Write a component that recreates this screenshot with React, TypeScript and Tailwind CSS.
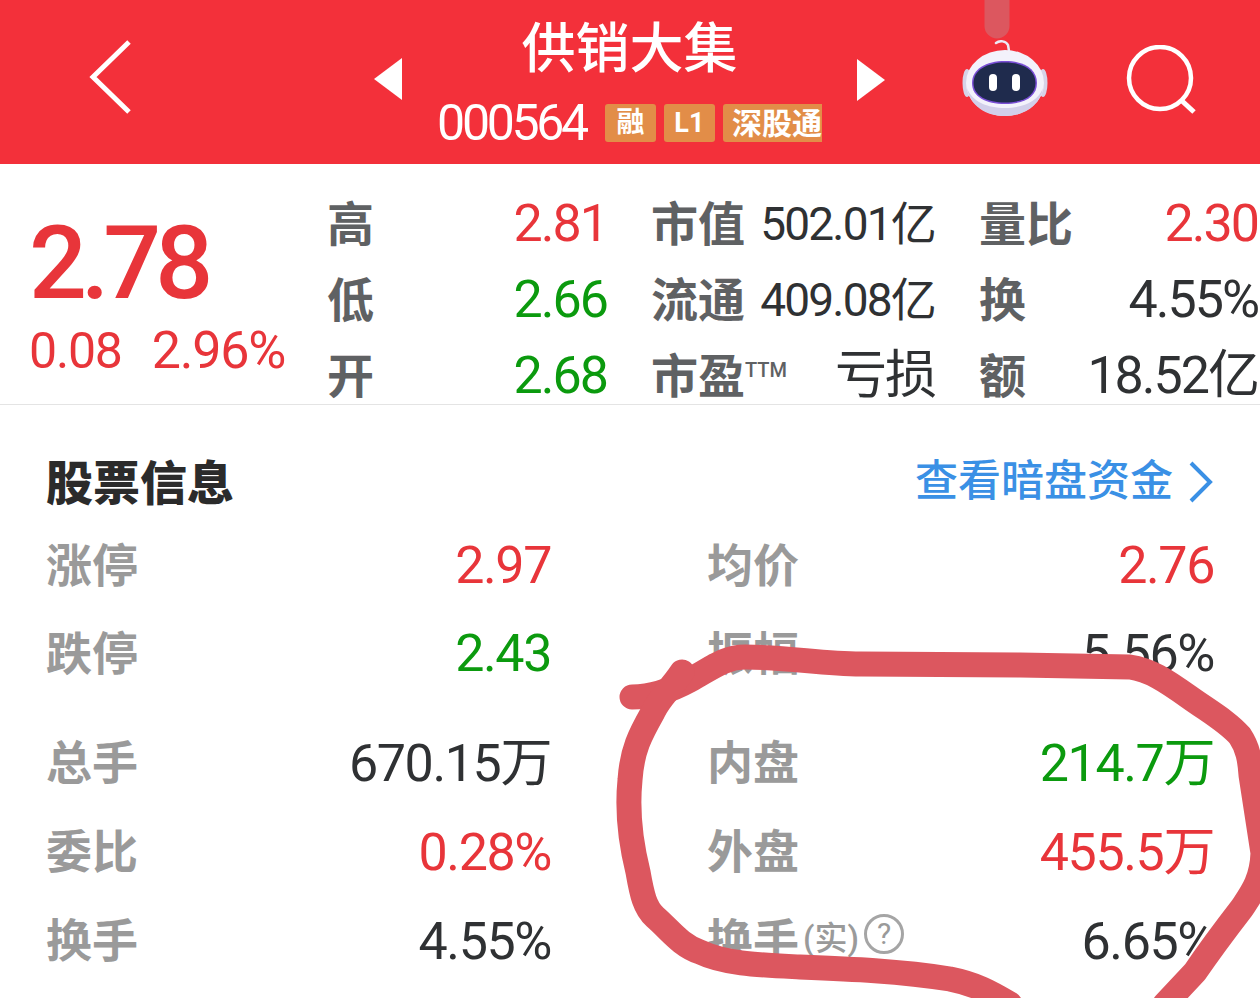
const RED = "text-[#e8353a]"
const GREEN = "text-[#0b9a0e]"
const DARK = "text-[#2f3133]"
const VALUE = "text-[52px] tracking-[-2px]"
const VALUE_SMALL = "text-[46px] tracking-[-1.8px]"
const INFO_VALUE = "text-[52px] tracking-[-1.4px]"

const quoteRows = [
  [
    { label: "高", value: "2.81", color: RED, size: VALUE },
    { label: "市值", value: "502.01亿", color: DARK, size: VALUE_SMALL },
    { label: "量比", value: "2.30", color: RED, size: VALUE },
  ],
  [
    { label: "低", value: "2.66", color: GREEN, size: VALUE },
    { label: "流通", value: "409.08亿", color: DARK, size: VALUE_SMALL },
    { label: "换", value: "4.55%", color: DARK, size: VALUE },
  ],
  [
    { label: "开", value: "2.68", color: GREEN, size: VALUE },
    { label: "市盈™", value: "亏损", color: DARK, size: VALUE },
    { label: "额", value: "18.52亿", color: DARK, size: VALUE },
  ],
]

const infoGroups = [
  {
    rowClass: "h-[88px]",
    rows: [
      { label: "涨停", value: "2.97", color: RED, label2: "均价", value2: "2.76", color2: RED },
      { label: "跌停", value: "2.43", color: GREEN, label2: "振幅", value2: "5.56%", color2: DARK },
    ],
  },
  {
    rowClass: "h-[89px]",
    rows: [
      { label: "总手", value: "670.15万", color: DARK, label2: "内盘", value2: "214.7万", color2: GREEN },
      { label: "委比", value: "0.28%", color: RED, label2: "外盘", value2: "455.5万", color2: RED },
      { label: "换手", value: "4.55%", color: DARK, label2: "换手", value2: "6.65%", color2: DARK, help: true },
    ],
  },
]

function RobotIcon() {
  return (
    <svg width="86" height="76" viewBox="0 0 86 76" className="shrink-0">
      <path d="M34 3 C38 0 44 1 46 5 L47 11" fill="none" stroke="#eceaf6" strokeWidth="2.5" strokeLinecap="round" />
      <ellipse cx="5" cy="43" rx="4.5" ry="14" fill="#d6d3e8" />
      <ellipse cx="81" cy="43" rx="4.5" ry="14" fill="#d6d3e8" />
      <ellipse cx="43" cy="43" rx="39" ry="33" fill="#f3f2fb" />
      <path d="M5 48 C8 66 24 76 43 76 C62 76 78 66 81 48 C76 62 60 68 43 68 C26 68 10 62 5 48 Z" fill="#d2cfea" />
      <path d="M10 43 C10 29 24 21 43 21 C62 21 75 29 75 43 C75 57 62 64 43 64 C24 64 10 57 10 43 Z" fill="#7a4fd6" />
      <path d="M11.5 43 C11.5 30 25 22.5 43 22.5 C61 22.5 73.5 30 73.5 43 C73.5 56 61 62.5 43 62.5 C25 62.5 11.5 56 11.5 43 Z" fill="#1f2b4d" />
      <rect x="27" y="34" width="8" height="17" rx="4" fill="#ffffff" />
      <rect x="50" y="34" width="8" height="17" rx="4" fill="#ffffff" />
    </svg>
  )
}

function StockHeader() {
  return (
    <div className="flex h-[164px] shrink-0 items-start bg-[#f3303a] text-white">
      <svg width="46" height="78" viewBox="0 0 46 78" className="mt-[38px] ml-[88px] shrink-0">
        <path d="M41 4 L5 39 L41 74" fill="none" stroke="#ffffff" strokeWidth="5" />
      </svg>
      <svg width="28" height="42" viewBox="0 0 28 42" className="mt-[58px] ml-[240px] shrink-0">
        <path d="M0 21 L28 0 L28 42 Z" fill="#ffffff" />
      </svg>
      <div className="flex w-[455px] shrink-0 flex-col items-center">
        <div className="mt-[16px] text-[54px] leading-[68px] font-medium">供销大集</div>
        <div className="mt-[18px] flex items-center gap-[8px]">
          <span className="mr-[11px] text-[50px] leading-[42px] tracking-[-3.3px]">000564</span>
          <span className="flex h-[38px] w-[51px] items-center justify-center rounded-[3px] bg-[#e28d48] text-[28px] font-bold">融</span>
          <span className="flex h-[38px] w-[51px] items-center justify-center rounded-[3px] bg-[#e28d48] text-[27px] font-bold">L1</span>
          <span className="flex h-[38px] w-[99px] items-center justify-end rounded-l-[3px] bg-[#e28d48] text-[30px] font-bold whitespace-nowrap">深股通</span>
        </div>
      </div>
      <svg width="28" height="42" viewBox="0 0 28 42" className="mt-[59px] shrink-0">
        <path d="M28 21 L0 0 L0 42 Z" fill="#ffffff" />
      </svg>
      <div className="mt-[40px] ml-[77px] shrink-0">
        <RobotIcon />
      </div>
      <svg width="72" height="70" viewBox="0 0 72 70" className="mt-[45px] ml-[78px] shrink-0">
        <circle cx="34" cy="33" r="31" fill="none" stroke="#ffffff" strokeWidth="4.5" />
        <path d="M55 55 L68 67" fill="none" stroke="#ffffff" strokeWidth="5" />
      </svg>
    </div>
  )
}

function QuotePanel() {
  return (
    <div className="flex h-[241px] shrink-0 overflow-hidden border-b border-[#e4e4e4]">
      <div className={`w-[327px] shrink-0 pl-[29px] ${RED}`}>
        <div className="mt-[39px] text-[102px] leading-[120px] font-medium tracking-[-6px]">2.78</div>
        <div className="-mt-[1px] flex items-baseline gap-[30px] text-[50px] leading-[58px] tracking-[-1.2px]">
          <span>0.08</span>
          <span className="text-[52px]">2.96%</span>
        </div>
      </div>
      <div className="pt-[22px]">
        {quoteRows.map((row) => (
          <div key={row[0].label} className="grid h-[76px] grid-cols-[280px_284px_279px] gap-x-[44px]">
            {row.map((cell) => (
              <div key={cell.label} className="flex items-center justify-between">
                <span className="text-[47px] leading-none font-bold whitespace-nowrap text-[#5f6163]">
                  {cell.label === "市盈™" ? (
                    <>
                      市盈<span className="relative -top-[16px] text-[20px] font-medium">TTM</span>
                    </>
                  ) : (
                    cell.label
                  )}
                </span>
                <span className={`leading-none whitespace-nowrap ${cell.size} ${cell.color}`}>{cell.value}</span>
              </div>
            ))}
          </div>
        ))}
      </div>
    </div>
  )
}

function StockInfo() {
  return (
    <div className="px-[46px] pt-[50px]">
      <div className="flex h-[58px] items-center justify-between">
        <h2 className="text-[47px] font-black text-[#2b2b2b]">股票信息</h2>
        <div className="-mt-[5px] flex items-center gap-[15px] text-[43px] font-medium text-[#3a90e5]">
          查看暗盘资金
          <svg width="26" height="42" viewBox="0 0 26 42">
            <path d="M3 2 L22 21 L3 40" fill="none" stroke="#3a90e5" strokeWidth="4" />
          </svg>
        </div>
      </div>
      <div className="mt-[9px]">
        {infoGroups.map((group, i) => (
          <div key={i} className={i === 1 ? "mt-[21px]" : ""}>
            {group.rows.map((row) => (
              <div key={row.label} className={`grid grid-cols-[505px_505px] gap-x-[158px] ${group.rowClass}`}>
                <div className="flex items-center justify-between">
                  <span className="text-[46px] font-bold text-[#9a9a9a]">{row.label}</span>
                  <span className={`whitespace-nowrap ${INFO_VALUE} ${row.color}`}>{row.value}</span>
                </div>
                <div className="flex items-center justify-between">
                  <span className="-ml-[2px] flex items-center text-[46px] font-bold text-[#9a9a9a]">
                    {row.label2}
                    {row.help && (
                      <>
                        <span className="-mt-[6px] ml-[4px] text-[33px] font-medium whitespace-nowrap">(实)</span>
                        <span className="relative -top-[8px] ml-[5px] flex h-[40px] w-[40px] shrink-0 items-center justify-center rounded-full border-[3px] border-[#a5a5a5] text-[30px] font-normal">?</span>
                      </>
                    )}
                  </span>
                  <span className={`whitespace-nowrap ${INFO_VALUE} ${row.color2}`}>{row.value2}</span>
                </div>
              </div>
            ))}
          </div>
        ))}
      </div>
    </div>
  )
}

// hand-drawn marker scribble that sits on top of the screenshot
function MarkerScribble() {
  return (
    <svg width="1260" height="998" viewBox="0 0 1260 998" className="absolute inset-0">
      <g fill="none" stroke="#dc575f" strokeWidth="25" strokeLinecap="round" strokeLinejoin="round">
        <path d="M632 697 C650 697 668 692 690 680 C712 668 725 657 745 657 C790 657 820 664 861 664 L1020 665 L1130 667 C1150 670 1165 680 1189 697 C1210 712 1228 722 1240 736 C1248 748 1250 760 1251 775 L1263 853 C1262 880 1252 893 1242 908 C1225 930 1210 950 1195 972 L1165 1004" />
        <path d="M682 672 C670 690 660 697 653 712 C640 735 632 750 630 780 C627 810 630 840 638 872 C642 895 645 908 655 917 C670 930 680 945 700 952 C725 964 760 965 800 967 C850 969 900 971 950 979 C975 984 990 992 1010 1004" />
        <path d="M997 -8 L997 26" />
      </g>
    </svg>
  )
}

export default function App() {
  return (
    <div className="relative flex h-[998px] w-[1260px] flex-col overflow-hidden bg-white font-['Roboto','Noto_Sans_CJK_SC',sans-serif]">
      <StockHeader />
      <QuotePanel />
      <StockInfo />
      <MarkerScribble />
    </div>
  )
}
